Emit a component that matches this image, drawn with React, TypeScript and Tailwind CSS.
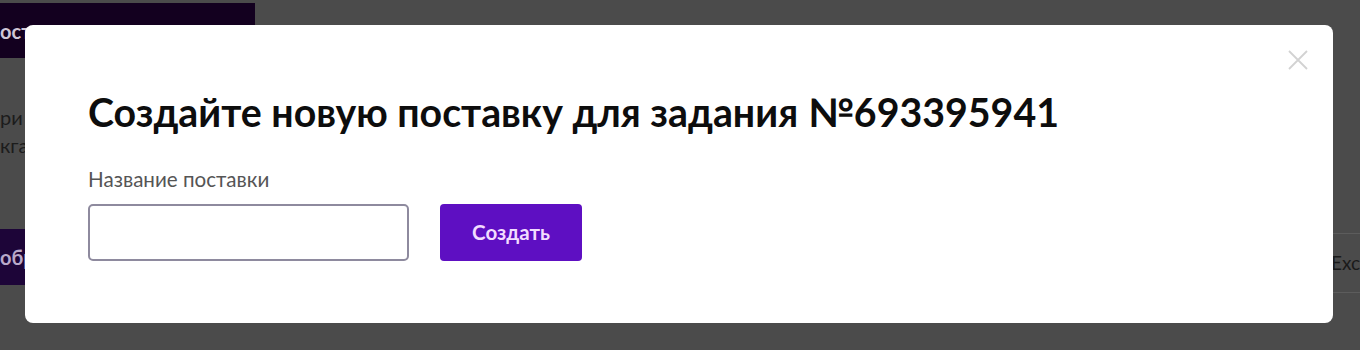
import React from 'react';

const App: React.FC = () => {
  return (
    <div className="relative h-[350px] w-full overflow-hidden bg-[#4b4b4b] font-['Lato','Noto_Sans',sans-serif]">
      {/* Page behind the dimmed backdrop */}
      <div className="flex h-full w-full">
        <div className="flex w-[255px] shrink-0 flex-col pt-[3px]">
          <div className="flex h-[55px] items-center bg-[#13001f] text-[20px] font-bold text-[#cfc6d6]">
            <span>ост</span>
          </div>
          <div className="mt-[45px] flex flex-col text-[20px] leading-[28px] text-[#1c1c1c]">
            <span>ри</span>
            <span>кга</span>
          </div>
          <div className="mt-[70px] flex h-[56px] w-[150px] items-center bg-[#1d0538] text-[20px] font-bold text-[#b9a9c9]">
            <span>обр</span>
          </div>
        </div>
        <div className="flex min-w-0 flex-1 flex-col justify-end pb-[57px]">
          <div className="flex h-[60px] items-center justify-end border-y border-[#5c5c5c] text-[19px] text-[#1a1a1a]">
            <span>Exc</span>
          </div>
        </div>
      </div>

      {/* Modal */}
      <div className="absolute left-[25px] top-[25px] h-[298px] w-[1308px] rounded-[8px] bg-white">
        <button className="absolute right-[24px] top-[24px] flex h-[22px] w-[22px] items-center justify-center text-[#d2d2d2]">
          <svg width="22" height="22" viewBox="0 0 22 22" fill="none" stroke="currentColor" strokeWidth="1.8">
            <path d="M2 2L20 20M20 2L2 20" />
          </svg>
        </button>
        <div className="flex flex-col pl-[63px] pt-[63px]">
          <h2 className="text-[39.3px] font-bold leading-[48px] text-[#0d0d0d]">Создайте новую поставку для задания №693395941</h2>
          <label className="mt-[31px] text-[20.6px] leading-[24px] text-[#555555]">Название поставки</label>
          <div className="mt-[13px] flex items-center gap-[31px]">
            <input className="h-[57px] w-[321px] rounded-[5px] border-2 border-[#8e8a9e] bg-white px-3 outline-none" />
            <button className="h-[57px] w-[142px] rounded-[4px] bg-[#5e0fc2] text-[20.5px] font-bold text-[#f2dcff]">Создать</button>
          </div>
        </div>
      </div>
    </div>
  );
};

export default App;
